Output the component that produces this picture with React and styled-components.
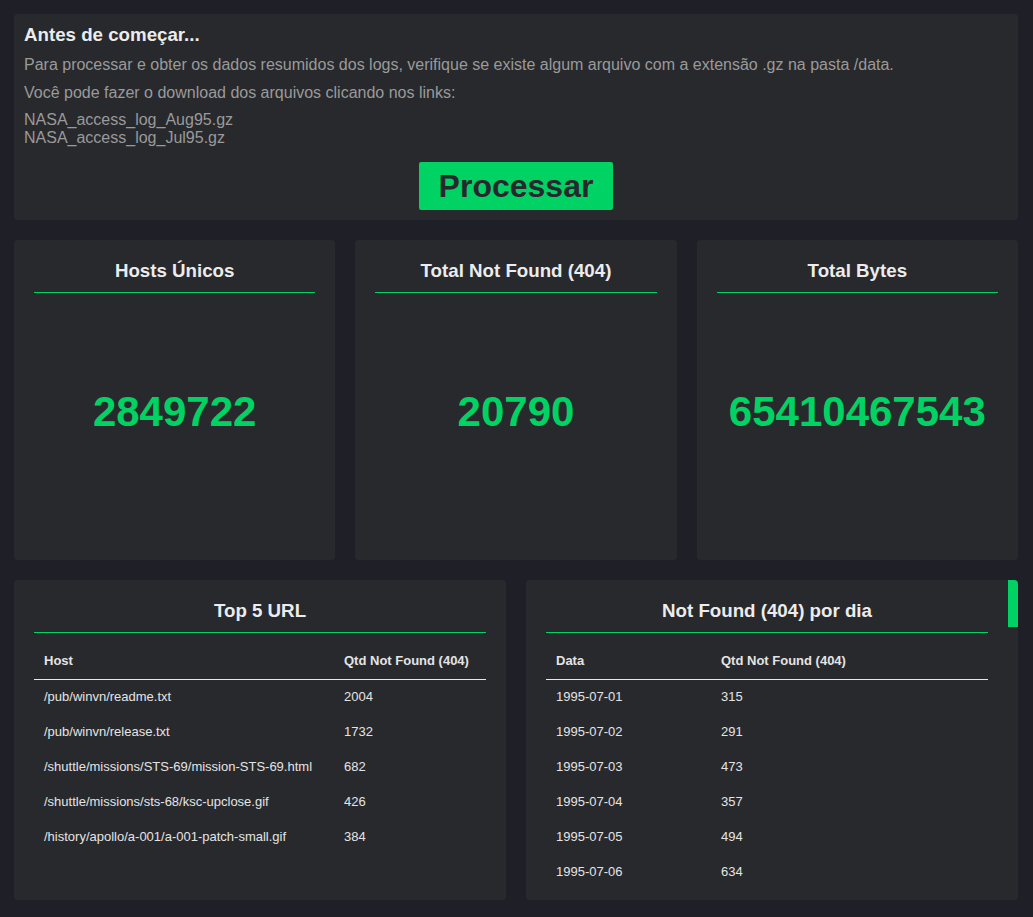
import React from 'react';
import styled, { createGlobalStyle } from 'styled-components';

const GlobalStyle = createGlobalStyle`
  html, body {
    margin: 0;
    padding: 0;
    background: #1f2027;
    font-family: "Liberation Sans", Arial, sans-serif;
  }
  * { box-sizing: border-box; }
`;

const topUrls = [
  { host: '/pub/winvn/readme.txt', qtd: 2004 },
  { host: '/pub/winvn/release.txt', qtd: 1732 },
  { host: '/shuttle/missions/STS-69/mission-STS-69.html', qtd: 682 },
  { host: '/shuttle/missions/sts-68/ksc-upclose.gif', qtd: 426 },
  { host: '/history/apollo/a-001/a-001-patch-small.gif', qtd: 384 },
];

const perDay = [
  { date: '1995-07-01', qtd: 315 },
  { date: '1995-07-02', qtd: 291 },
  { date: '1995-07-03', qtd: 473 },
  { date: '1995-07-04', qtd: 357 },
  { date: '1995-07-05', qtd: 494 },
  { date: '1995-07-06', qtd: 634 },
];

const stats = [
  { title: 'Hosts Únicos', value: '2849722' },
  { title: 'Total Not Found (404)', value: '20790' },
  { title: 'Total Bytes', value: '65410467543' },
];

const Page = styled.div`
  padding: 14px 15px 17px 14px;
  display: flex;
  flex-direction: column;
  gap: 20px;
`;

const Card = styled.div`
  background: #28292d;
  border-radius: 4px;
`;

const IntroCard = styled(Card)`
  height: 206px;
  padding: 10px 10px 9px;
  display: flex;
  flex-direction: column;
`;

const IntroTitle = styled.h3`
  margin: 0;
  font-size: 18.72px;
  line-height: 22px;
  font-weight: bold;
  color: #ececec;
`;

const IntroText = styled.p`
  margin: 10px 0 0;
  font-size: 16px;
  line-height: 18px;
  color: #9a9a9a;
`;

const Links = styled.div`
  margin-top: 9px;
  display: flex;
  flex-direction: column;
`;

const FileLink = styled.a`
  font-size: 16px;
  line-height: 18px;
  color: #9a9a9a;
  text-decoration: none;
`;

const ProcessButton = styled.button`
  margin: 15px auto 0;
  height: 48px;
  padding: 0 20px;
  border: none;
  border-radius: 2px;
  background: #00d264;
  color: #27282d;
  font-family: "Liberation Sans", Arial, sans-serif;
  font-size: 32px;
  font-weight: bold;
  cursor: pointer;
`;

const StatsRow = styled.div`
  display: grid;
  grid-template-columns: repeat(3, 1fr);
  gap: 20px;
`;

const StatCard = styled(Card)`
  height: 320px;
  padding: 20px;
  display: flex;
  flex-direction: column;
`;

const CardTitle = styled.h3`
  margin: 0;
  padding: 0 0 10px;
  font-size: 18.72px;
  line-height: 22px;
  font-weight: bold;
  color: #ececec;
  text-align: center;
  border-bottom: 1px solid #00d264;
`;

const StatValue = styled.div`
  flex: 1;
  display: flex;
  align-items: center;
  justify-content: center;
  padding-bottom: 10px;
  font-size: 42px;
  font-weight: bold;
  color: #00d264;
`;

const TablesRow = styled.div`
  display: grid;
  grid-template-columns: 1fr 1fr;
  gap: 20px;
`;

const TableCard = styled(Card)`
  position: relative;
  height: 320px;
  padding: 20px ${p => (p.$scroll ? '30px' : '20px')} 20px 20px;
  overflow: hidden;
`;

const ScrollThumb = styled.div`
  position: absolute;
  top: 0;
  right: 0;
  width: 10px;
  height: 47px;
  background: #00d264;
`;

const Table = styled.table`
  width: 100%;
  margin-top: 9px;
  border-collapse: collapse;
  font-size: 13px;
  color: #e4e4e4;
`;

const Th = styled.th`
  text-align: left;
  font-weight: bold;
  padding: 0 10px;
  height: 37px;
  border-bottom: 1px solid #e8e8e8;
  width: ${p => p.$width || 'auto'};
`;

const Td = styled.td`
  padding: 0 10px;
  height: 35px;
  white-space: nowrap;
`;

export default function App() {
  return (
    <>
      <GlobalStyle />
      <Page>
        <IntroCard>
          <IntroTitle>Antes de começar...</IntroTitle>
          <IntroText>
            Para processar e obter os dados resumidos dos logs, verifique se existe algum arquivo com a extensão .gz na pasta /data.
          </IntroText>
          <IntroText>Você pode fazer o download dos arquivos clicando nos links:</IntroText>
          <Links>
            <FileLink href="#">NASA_access_log_Aug95.gz</FileLink>
            <FileLink href="#">NASA_access_log_Jul95.gz</FileLink>
          </Links>
          <ProcessButton>Processar</ProcessButton>
        </IntroCard>

        <StatsRow>
          {stats.map(s => (
            <StatCard key={s.title}>
              <CardTitle>{s.title}</CardTitle>
              <StatValue>{s.value}</StatValue>
            </StatCard>
          ))}
        </StatsRow>

        <TablesRow>
          <TableCard>
            <CardTitle>Top 5 URL</CardTitle>
            <Table>
              <thead>
                <tr>
                  <Th $width="300px">Host</Th>
                  <Th>Qtd Not Found (404)</Th>
                </tr>
              </thead>
              <tbody>
                {topUrls.map(r => (
                  <tr key={r.host}>
                    <Td>{r.host}</Td>
                    <Td>{r.qtd}</Td>
                  </tr>
                ))}
              </tbody>
            </Table>
          </TableCard>

          <TableCard $scroll>
            <CardTitle>Not Found (404) por dia</CardTitle>
            <Table>
              <thead>
                <tr>
                  <Th $width="165px">Data</Th>
                  <Th>Qtd Not Found (404)</Th>
                </tr>
              </thead>
              <tbody>
                {perDay.map(r => (
                  <tr key={r.date}>
                    <Td>{r.date}</Td>
                    <Td>{r.qtd}</Td>
                  </tr>
                ))}
              </tbody>
            </Table>
            <ScrollThumb />
          </TableCard>
        </TablesRow>
      </Page>
    </>
  );
}
